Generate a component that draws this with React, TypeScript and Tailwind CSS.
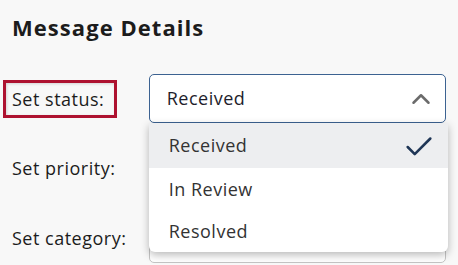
import { Check, ChevronUp } from 'lucide-react'

const options = ['Received', 'In Review', 'Resolved']

export default function App() {
  const font = { fontFamily: '"Open Sans", "Noto Sans", sans-serif' }
  return (
    <div className="w-[458px] h-[265px] overflow-hidden bg-[#f8f8f8] px-3 pt-[11px]" style={font}>
      <h1 className="text-[22px] font-bold text-[#1c1c1c] leading-[32px] tracking-[1.05px]">Message Details</h1>

      <div className="mt-[31px] flex flex-col gap-[21px] text-[18px] tracking-[0.5px]">
        {/* status */}
        <div className="flex items-center h-[49px]">
          <div className="w-[138px]">
            <span className="-ml-[9px] inline-block border-[3px] border-[#ae1230] pl-[6px] pr-[10px] py-[3px] leading-[26px] text-[#1c1c1c] shadow-[inset_1px_1px_3px_rgba(0,0,0,0.15)]">
              Set status:
            </span>
          </div>
          <div className="relative w-[300px]">
            <div className="flex items-center justify-between h-[49px] rounded-[5px] border border-[#3c6291] bg-white pl-[17px] pr-[9px]">
              <span className="text-[#1e1e2c]">Received</span>
              <ChevronUp className="w-[30px] h-[30px] text-[#6b6b6b]" strokeWidth={2} />
            </div>
            <div className="absolute left-0 top-[49px] z-10 w-[299px] rounded-b-[6px] bg-white shadow-[0_3px_8px_rgba(0,0,0,0.28)] overflow-hidden">
              {options.map((o, i) => (
                <div
                  key={o}
                  className={`flex items-center justify-between pl-[20px] pr-[12px] text-[#333333] ${
                    i === 0 ? 'h-[45px] bg-[#edeef0]' : 'h-[42px]'
                  }`}
                >
                  <span>{o}</span>
                  {i === 0 && <Check className="mt-[3px] w-[34px] h-[34px] text-[#1f3656]" strokeWidth={1.8} />}
                </div>
              ))}
            </div>
          </div>
        </div>

        {/* priority */}
        <div className="flex items-center h-[49px]">
          <div className="w-[138px] text-[#1c1c1c]">Set priority:</div>
          <div className="w-[300px] h-[49px] rounded-[5px] border border-[#c4c4c4] bg-white" />
        </div>

        {/* category */}
        <div className="flex items-center h-[49px]">
          <div className="w-[138px] text-[#1c1c1c]">Set category:</div>
          <div className="w-[300px] h-[49px] rounded-[5px] border border-[#c4c4c4] bg-white" />
        </div>
      </div>
    </div>
  )
}
